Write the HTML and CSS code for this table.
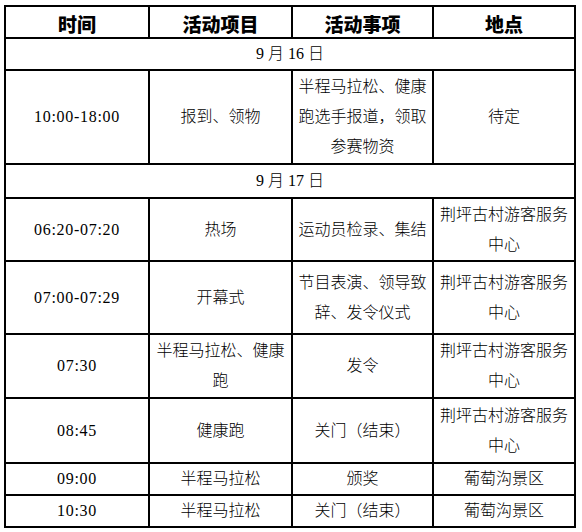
FILE: index.html
```html
<!DOCTYPE html>
<html>
<head>
<meta charset="utf-8">
<title>赛事日程</title>
<link rel="stylesheet" href="styles.css">
</head>
<body>
<table class="schedule">
  <colgroup>
    <col class="c1"><col class="c2"><col class="c3"><col class="c4">
  </colgroup>
  <thead>
    <tr class="head">
      <th>时间</th><th>活动项目</th><th>活动事项</th><th>地点</th>
    </tr>
  </thead>
  <tbody>
    <tr class="day h32"><td colspan="4">9 月 16 日</td></tr>
    <tr class="h94">
      <td class="time">10:00-18:00</td>
      <td>报到、领物</td>
      <td>半程马拉松、健康跑选手报道，领取参赛物资</td>
      <td>待定</td>
    </tr>
    <tr class="day h34"><td colspan="4">9 月 17 日</td></tr>
    <tr class="h63">
      <td class="time">06:20-07:20</td>
      <td>热场</td>
      <td>运动员检录、集结</td>
      <td>荆坪古村游客服务中心</td>
    </tr>
    <tr class="h73">
      <td class="time">07:00-07:29</td>
      <td>开幕式</td>
      <td>节目表演、领导致辞、发令仪式</td>
      <td>荆坪古村游客服务中心</td>
    </tr>
    <tr class="h64">
      <td class="time">07:30</td>
      <td>半程马拉松、健康跑</td>
      <td>发令</td>
      <td>荆坪古村游客服务中心</td>
    </tr>
    <tr class="h65">
      <td class="time">08:45</td>
      <td>健康跑</td>
      <td>关门（结束）</td>
      <td>荆坪古村游客服务中心</td>
    </tr>
    <tr class="h31">
      <td class="time">09:00</td>
      <td>半程马拉松</td>
      <td>颁奖</td>
      <td>葡萄沟景区</td>
    </tr>
    <tr class="h29">
      <td class="time">10:30</td>
      <td>半程马拉松</td>
      <td>关门（结束）</td>
      <td>葡萄沟景区</td>
    </tr>
  </tbody>
</table>
</body>
</html>
```
FILE: styles.css
```css
html, body {
  margin: 0;
  padding: 0;
  background: #fff;
}

body {
  font-family: "Liberation Serif", "Noto Sans CJK SC", serif;
  color: #000;
}

.schedule {
  margin: 5px 0 0 4px;
  width: 572px;
  table-layout: fixed;
  border-collapse: collapse;
}

.c1 { width: 144px; }
.c2 { width: 143px; }
.c3 { width: 141px; }
.c4 { width: 142px; }

.schedule th,
.schedule td {
  border: 2px solid #000;
  padding: 0 4px;
  text-align: center;
  vertical-align: middle;
}

.schedule th {
  font-family: "Noto Sans CJK SC", sans-serif;
  font-weight: 900;
  font-size: 19px;
  line-height: 24px;
  padding-top: 3px;
}

.schedule td {
  font-size: 16px;
  line-height: 30px;
  font-weight: 300;
}

.schedule td.time {
  letter-spacing: 0.7px;
}

.head { height: 32px; }
.h32 { height: 32px; }
.h34 { height: 34px; }
.h94 { height: 94px; }
.h63 { height: 63px; }
.h73 { height: 73px; }
.h64 { height: 64px; }
.h65 { height: 65px; }
.h31 { height: 31px; }
.h29 { height: 29px; }
```
